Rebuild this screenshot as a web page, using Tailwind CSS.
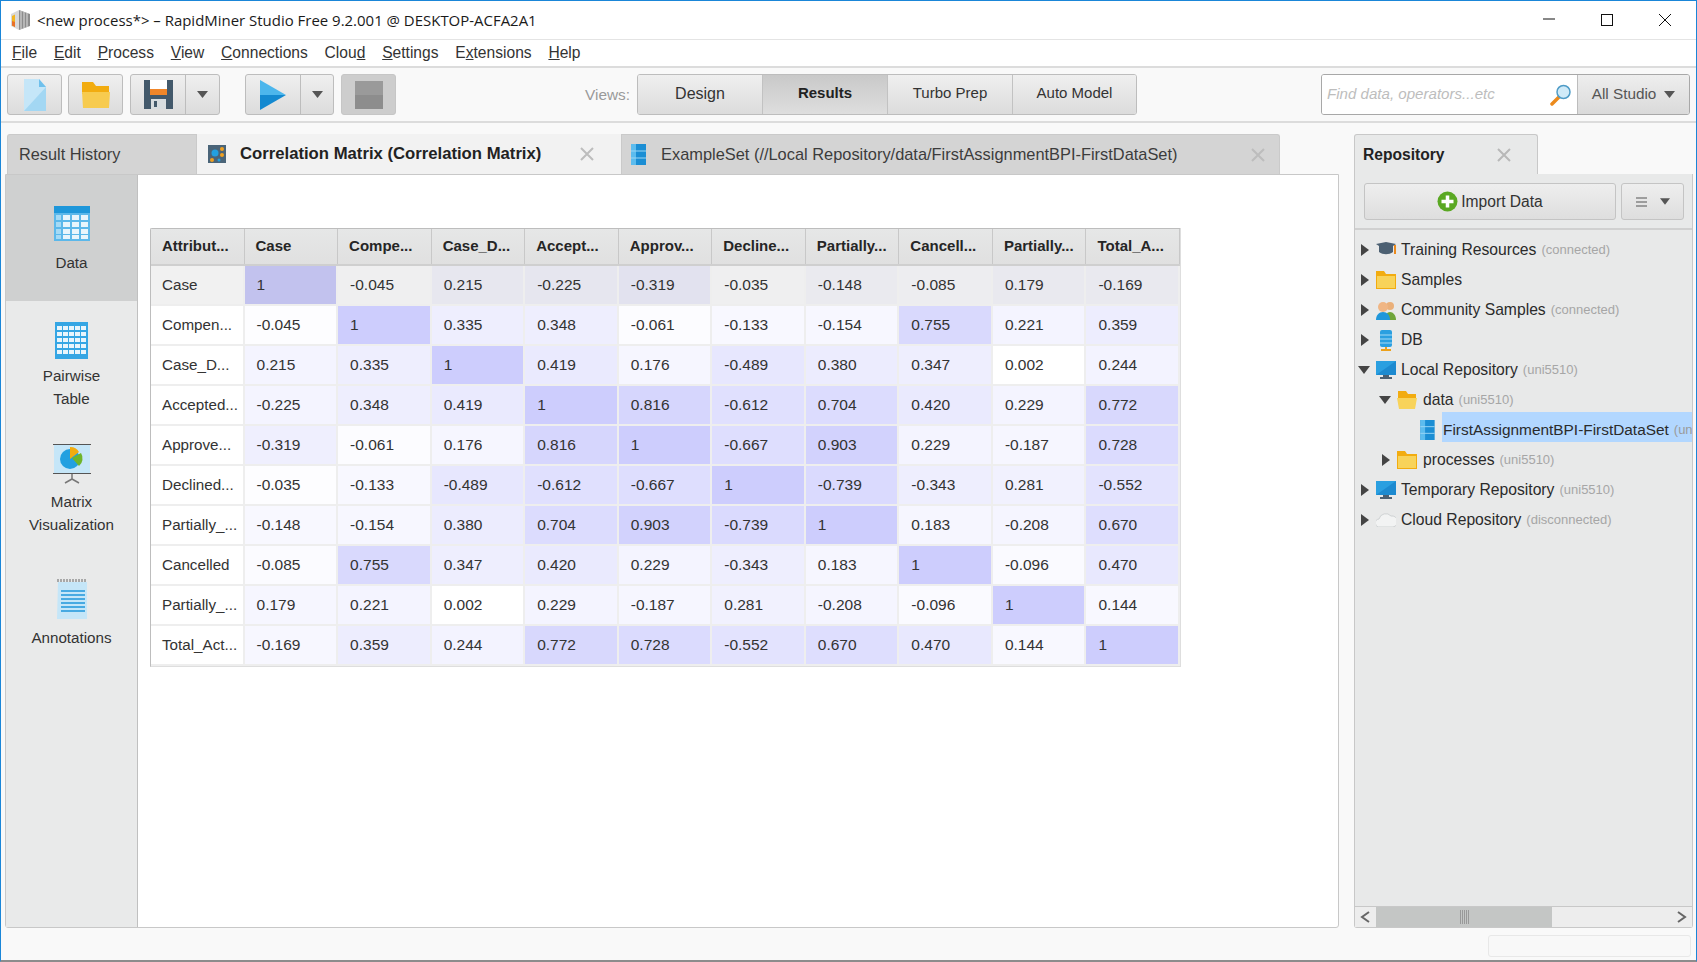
<!DOCTYPE html>
<html lang="en">
<head>
  <meta charset="UTF-8">
  <script src="https://cdn.jsdelivr.net/npm/@tailwindcss/browser@4"></script>
  <title>RapidMiner Studio</title>
</head>
<body class="m-0 overflow-hidden">
  <div class="w-[1697px] h-[962px] flex flex-col bg-[#f9f9f9] border-x border-t border-[#1a86d8] border-b-2 border-b-[#8c8c8c] font-['Liberation_Sans',sans-serif] text-[15.6px] text-[#2b2b2b] overflow-hidden">

    <!-- title bar -->
    <header class="h-[39px] shrink-0 bg-white border-b border-[#e4e4e4] flex items-center pl-[10px]">
      <svg class="w-[20px] h-[22px] mr-[6px]" viewBox="0 0 20 22">
        <path d="M0 5l8-4v20L0 17z" fill="#d9d9d9"/>
        <path d="M1 7l3-1.500V18l-3-1.500z" fill="#f2b521"/>
        <path d="M1 12l3 1v5l-3-1.500z" fill="#e8702a"/>
        <path d="M8 1l11 4v12l-11 4z" fill="#8c8c8c"/>
        <path d="M10 2v18M13 3v16M16 4v14" stroke="#d2d2d2" stroke-width="1.200"/>
      </svg>
      <span class="font-['Open_Sans',sans-serif] text-[14.960px] text-[#1a1a1a]">&lt;new process*&gt; – RapidMiner Studio Free 9.2.001 @ DESKTOP-ACFA2A1</span>
      <div class="ml-auto flex items-center">
        <svg class="w-[14px] h-[14px] mr-[44px]" viewBox="0 0 14 14"><path d="M1 6h12" stroke="#111" stroke-width="1"/></svg>
        <svg class="w-[14px] h-[14px] mr-[44px]" viewBox="0 0 14 14"><rect x="1.500" y="1.500" width="11" height="11" fill="none" stroke="#111"/></svg>
        <svg class="w-[14px] h-[14px] mr-[24px]" viewBox="0 0 14 14"><path d="M1 1l12 12M13 1L1 13" stroke="#111"/></svg>
      </div>
    </header>

    <!-- menu bar -->
    <nav class="h-[28px] shrink-0 bg-white border-b-2 border-[#dcdcdc] flex items-center pl-[11px] gap-[16.800px] text-[#333]">
      <span><u>F</u>ile</span>
      <span><u>E</u>dit</span>
      <span><u>P</u>rocess</span>
      <span><u>V</u>iew</span>
      <span><u>C</u>onnections</span>
      <span>Clou<u>d</u></span>
      <span><u>S</u>ettings</span>
      <span>E<u>x</u>tensions</span>
      <span><u>H</u>elp</span>
    </nav>

    <!-- toolbar -->
    <div class="h-[55px] shrink-0 border-b-2 border-[#dcdcdc] flex items-center pl-[6px]">
      <button class="w-[55px] h-[41px] rounded-[3px] border border-[#bdbdbd] bg-gradient-to-b from-[#efefef] to-[#dcdcdc] flex items-center justify-center">
        <svg class="w-[24px] h-[34px]" viewBox="0 0 24 34">
          <path d="M1 1h15l7 8v24H1z" fill="#c5e6f8"/>
          <path d="M1 33L23 9v24z" fill="#a3d7f3"/>
          <path d="M16 1l7 8h-7z" fill="#6fc0ec"/>
        </svg>
      </button>
      <button class="w-[55px] h-[41px] ml-[6px] rounded-[3px] border border-[#bdbdbd] bg-gradient-to-b from-[#efefef] to-[#dcdcdc] flex items-center justify-center">
        <svg class="w-[30px] h-[28px]" viewBox="0 0 30 28">
          <path d="M1 1h11l3 4h13v8H1z" fill="#f2ac10"/>
          <path d="M1 11h28l-1 16H2z" fill="#f7cb4f"/>
        </svg>
      </button>
      <div class="w-[90px] h-[41px] ml-[7px] rounded-[3px] border border-[#bdbdbd] bg-gradient-to-b from-[#efefef] to-[#dcdcdc] flex items-center">
        <div class="w-[55px] flex justify-center border-r border-[#bdbdbd] h-full items-center">
          <svg class="w-[29px] h-[29px]" viewBox="0 0 29 29">
            <path d="M0 0h29v29H0z" fill="#43596b"/>
            <path d="M6 0h17v13H6z" fill="#fff"/>
            <path d="M6 9h17v6H6z" fill="#f0862a"/>
            <path d="M7 19h15v10H7z" fill="#d8dde0"/>
            <path d="M10 21h3v6h-3z" fill="#43596b"/>
          </svg>
        </div>
        <svg class="w-[11px] h-[7px] mx-auto" viewBox="0 0 11 7"><path d="M0 0h11L5.500 7z" fill="#555"/></svg>
      </div>
      <div class="w-[89px] h-[41px] ml-[25px] rounded-[3px] border border-[#bdbdbd] bg-gradient-to-b from-[#efefef] to-[#dcdcdc] flex items-center">
        <div class="w-[55px] flex justify-center border-r border-[#bdbdbd] h-full items-center">
          <svg class="w-[26px] h-[30px]" viewBox="0 0 26 30">
            <path d="M0 0l26 15H0z" fill="#4cb6ec"/>
            <path d="M0 15h26L0 30z" fill="#1389d0"/>
          </svg>
        </div>
        <svg class="w-[11px] h-[7px] mx-auto" viewBox="0 0 11 7"><path d="M0 0h11L5.500 7z" fill="#555"/></svg>
      </div>
      <button class="w-[55px] h-[41px] ml-[7px] rounded-[3px] bg-[#cdcdcd] border border-[#c6c6c6] flex items-center justify-center">
        <svg class="w-[28px] h-[28px]" viewBox="0 0 28 28">
          <rect width="28" height="14" fill="#9a9a9a"/>
          <rect y="14" width="28" height="14" fill="#8d8d8d"/>
        </svg>
      </button>

      <span class="ml-[189px] text-[#9a9a9a] text-[15.400px] w-[52px]">Views:</span>
      <div class="w-[500px] h-[41px] rounded-[3px] border border-[#bdbdbd] flex overflow-hidden text-[#333] text-[15px]">
        <div class="w-[125px] flex items-center justify-center pb-[2px] bg-gradient-to-b from-[#efefef] to-[#dcdcdc] border-r border-[#c2c2c2] text-[16px]">Design</div>
        <div class="w-[125px] flex items-center justify-center pb-[2px] bg-gradient-to-b from-[#c9c9c9] to-[#dedede] border-r border-[#c2c2c2] font-bold text-[#222]">Results</div>
        <div class="w-[125px] flex items-center justify-center pb-[2px] bg-gradient-to-b from-[#efefef] to-[#dcdcdc] border-r border-[#c2c2c2]">Turbo Prep</div>
        <div class="flex-1 flex items-center justify-center pb-[2px] bg-gradient-to-b from-[#efefef] to-[#dcdcdc]">Auto Model</div>
      </div>

      <div class="w-[369px] h-[41px] ml-[184px] rounded-[3px] border border-[#a8a8a8] flex overflow-hidden">
        <div class="w-[256px] bg-white flex items-center pl-[5px] pr-[5px] border-r border-[#bdbdbd]">
          <span class="italic text-[#bdbdbd] text-[15.100px]">Find data, operators...etc</span>
          <svg class="ml-auto w-[22px] h-[22px]" viewBox="0 0 22 22">
            <path d="M2 20l7-7" stroke="#ec8a1c" stroke-width="3.500" stroke-linecap="round"/>
            <circle cx="13.500" cy="8" r="6.500" fill="#cfeaf8" stroke="#4f9cc7" stroke-width="1.500"/>
          </svg>
        </div>
        <div class="flex-1 flex items-center justify-center gap-[8px] bg-gradient-to-b from-[#eeeeee] to-[#dadada] text-[#555] text-[15.300px]">
          All Studio
          <svg class="w-[11px] h-[7px]" viewBox="0 0 11 7"><path d="M0 0h11L5.500 7z" fill="#555"/></svg>
        </div>
      </div>
    </div>

    <!-- main area -->
    <div class="flex-1 flex pt-[11px] pl-[4px]">
      <!-- results perspective -->
      <div class="w-[1334px] flex flex-col">
        <div class="h-[40px] flex shrink-0">
          <div class="w-[190px] ml-[2px] rounded-tl-[3px] bg-[#d4d4d4] border border-[#cacaca] border-b-0 flex items-center pl-[11px] text-[#3c3c3c] text-[16.300px]">Result History</div>
          <div class="w-[424px] bg-[#f2f2f2] flex items-center pl-[11px] pr-[27px]">
            <svg class="w-[18px] h-[18px] mr-[14px]" viewBox="0 0 18 18">
              <rect width="18" height="18" fill="#4a6478"/>
              <circle cx="7" cy="8" r="3.500" fill="#22a0e0"/>
              <circle cx="14" cy="4" r="2" fill="#f0a020"/>
              <circle cx="14" cy="10" r="2" fill="#f0a020"/>
              <circle cx="4" cy="15" r="2" fill="#f0a020"/>
              <circle cx="11" cy="15" r="1.500" fill="#22a0e0"/>
            </svg>
            <span class="font-bold text-[#222] text-[16.700px]">Correlation Matrix (Correlation Matrix)</span>
            <svg class="ml-auto w-[14px] h-[14px]" viewBox="0 0 14 14"><path d="M1 1l12 12M13 1L1 13" stroke="#bdbdbd" stroke-width="2"/></svg>
          </div>
          <div class="w-[659px] rounded-tr-[3px] bg-[#d4d4d4] border border-[#cacaca] border-b-0 flex items-center pl-[9px] pr-[14px] text-[#3c3c3c]">
            <svg class="w-[15px] h-[21px] mr-[15px]" viewBox="0 0 15 21">
              <rect width="15" height="21" fill="#1b8ed4"/>
              <rect width="5" height="21" fill="#5cbcee"/>
              <path d="M0 7h15M0 14h15" stroke="#9ad6f4"/>
            </svg>
            <span class="text-[16.400px]">ExampleSet (//Local Repository/data/FirstAssignmentBPI-FirstDataSet)</span>
            <svg class="ml-auto w-[14px] h-[14px]" viewBox="0 0 14 14"><path d="M1 1l12 12M13 1L1 13" stroke="#bdbdbd" stroke-width="2"/></svg>
          </div>
        </div>

        <div class="h-[754px] flex border border-[#c8c8c8] rounded-b-[3px] bg-white">
          <!-- side tabs -->
          <aside class="w-[132px] shrink-0 bg-[#e9eaea] border-r border-[#c0c0c0] text-[#333] text-[15.200px] flex flex-col items-center text-center">
            <div class="w-full h-[126px] bg-[#cfd0d0] flex flex-col items-center pt-[31px]">
              <svg class="w-[36px] h-[35px]" viewBox="0 0 36 35">
                <rect width="36" height="35" fill="#5cb8ea"/>
                <rect width="36" height="7" fill="#1f97da"/>
                <g fill="#e8f5fc">
                  <rect x="9" y="9" width="7" height="5"/><rect x="18" y="9" width="7" height="5"/><rect x="27" y="9" width="7" height="5"/>
                  <rect x="9" y="16" width="7" height="5"/><rect x="18" y="16" width="7" height="5"/><rect x="27" y="16" width="7" height="5"/>
                  <rect x="9" y="23" width="7" height="5"/><rect x="18" y="23" width="7" height="5"/><rect x="27" y="23" width="7" height="5"/>
                  <rect x="9" y="29" width="7" height="4"/><rect x="18" y="29" width="7" height="4"/><rect x="27" y="29" width="7" height="4"/>
                </g>
                <g fill="#a5daf5">
                  <rect x="2" y="9" width="5" height="5"/><rect x="2" y="16" width="5" height="5"/><rect x="2" y="23" width="5" height="5"/><rect x="2" y="29" width="5" height="4"/>
                </g>
              </svg>
              <span class="mt-[11px]">Data</span>
            </div>
            <div class="mt-[21px] flex flex-col items-center leading-[22.500px]">
              <svg class="w-[33px] h-[37px] mb-[6px]" viewBox="0 0 33 37">
                <rect width="33" height="37" fill="#35a6e4"/>
                <g fill="#e8f5fc">
                  <rect x="2" y="4" width="5" height="4"/><rect x="8" y="4" width="5" height="4"/><rect x="14" y="4" width="5" height="4"/><rect x="20" y="4" width="5" height="4"/><rect x="26" y="4" width="5" height="4"/>
                  <rect x="2" y="10" width="5" height="4"/><rect x="8" y="10" width="5" height="4"/><rect x="14" y="10" width="5" height="4"/><rect x="20" y="10" width="5" height="4"/><rect x="26" y="10" width="5" height="4"/>
                  <rect x="2" y="16" width="5" height="4"/><rect x="8" y="16" width="5" height="4"/><rect x="14" y="16" width="5" height="4"/><rect x="20" y="16" width="5" height="4"/><rect x="26" y="16" width="5" height="4"/>
                  <rect x="2" y="22" width="5" height="4"/><rect x="8" y="22" width="5" height="4"/><rect x="14" y="22" width="5" height="4"/><rect x="20" y="22" width="5" height="4"/><rect x="26" y="22" width="5" height="4"/>
                  <rect x="2" y="28" width="5" height="4"/><rect x="8" y="28" width="5" height="4"/><rect x="14" y="28" width="5" height="4"/><rect x="20" y="28" width="5" height="4"/><rect x="26" y="28" width="5" height="4"/>
                </g>
              </svg>
              <span>Pairwise<br>Table</span>
            </div>
            <div class="mt-[34px] flex flex-col items-center leading-[22.500px]">
              <svg class="w-[38px] h-[40px] mb-[7px]" viewBox="0 0 38 40">
                <rect x="1" y="1" width="36" height="28" fill="#c5e6f8"/>
                <path d="M0 .5h38M0 29.500h38" stroke="#555"/>
                <path d="M19 30v5M19 35l-7 4M19 35l7 4" stroke="#777" stroke-width="1.500"/>
                <circle cx="17" cy="15" r="10" fill="#22a0e0"/>
                <path d="M17 15V3a10 10 0 0 1 9 5z" fill="#f2ac10"/>
                <path d="M19 14l9-5a10 10 0 0 1-2 13z" fill="#6fb52a"/>
              </svg>
              <span>Matrix<br>Visualization</span>
            </div>
            <div class="mt-[43px] flex flex-col items-center">
              <svg class="w-[30px] h-[40px] mb-[8px]" viewBox="0 0 30 40">
                <path d="M1 0v3M4 0v3M7 0v3M10 0v3M13 0v3M16 0v3M19 0v3M22 0v3M25 0v3M28 0v3" stroke="#666"/>
                <path d="M1 3h29v37H0z" fill="#c5e6f8"/>
                <path d="M4 12h24M4 16h24M4 20h24M4 24h24M4 28h24M4 32h24" stroke="#1f97da" stroke-width="1.500"/>
              </svg>
              <span>Annotations</span>
            </div>
          </aside>

          <div class="flex-1 pt-[53px] pl-[12px]">
            <div id="matrix" class="w-[1031px] border border-[#dedede] border-t-[#bdbdbd] border-l-[#bdbdbd] rounded-tl-[2px]"></div>
          </div>
        </div>
      </div>

      <!-- repository panel -->
      <div class="w-[339px] ml-[15px] flex flex-col text-[15.700px]">
        <div class="h-[40px] flex shrink-0">
          <div class="w-[184px] rounded-t-[3px] bg-[#e8e9e9] border border-[#c8c8c8] border-b-0 flex items-center pl-[8px] pr-[26px] font-bold text-[#222] text-[15.600px]">
            Repository
            <svg class="ml-auto w-[14px] h-[14px]" viewBox="0 0 14 14"><path d="M1 1l12 12M13 1L1 13" stroke="#b8b8b8" stroke-width="2"/></svg>
          </div>
        </div>
        <div class="h-[754px] bg-[#e8e9e9] border border-[#c8c8c8] border-t-0 rounded-b-[3px] flex flex-col">
          <div class="h-[56px] shrink-0 border-b-2 border-[#d0d0d0] flex items-center pl-[9px] gap-[5px] pt-[1px]">
            <button class="w-[252px] h-[37px] rounded-[3px] border border-[#c4c4c4] bg-gradient-to-b from-[#eeeeee] to-[#dedede] flex items-center justify-center gap-[3px] text-[#333] text-[15.600px]">
              <svg class="w-[21px] h-[21px]" viewBox="0 0 21 21">
                <circle cx="10.500" cy="10.500" r="10" fill="#5aa823"/>
                <path d="M10.500 4.500v12M4.500 10.500h12" stroke="#fff" stroke-width="3.500"/>
              </svg>
              Import Data
            </button>
            <button class="w-[63px] h-[37px] rounded-[3px] border border-[#c4c4c4] bg-gradient-to-b from-[#eeeeee] to-[#dedede] flex items-center justify-center gap-[13px]">
              <svg class="w-[11px] h-[10px]" viewBox="0 0 11 10"><path d="M0 1h11M0 5h11M0 9h11" stroke="#555" stroke-width="1.200"/></svg>
              <svg class="w-[10px] h-[7px]" viewBox="0 0 11 7"><path d="M0 0h11L5.500 7z" fill="#555"/></svg>
            </button>
          </div>

          <div class="flex-1 pt-[5px] overflow-hidden whitespace-nowrap">
            <div class="h-[30px] flex items-center pl-[6px]">
              <svg class="w-[8px] h-[12px] mr-[7px]" viewBox="0 0 8 12"><path d="M0 0l8 6-8 6z" fill="#444"/></svg>
              <svg class="w-[20px] h-[16px] mr-[5px]" viewBox="0 0 20 16"><path d="M0 2l10-2 10 2-3 2v6c-4 3-10 3-14 0V4z" fill="#4c6072"/><path d="M19 3v9" stroke="#ec8a1c" stroke-width="2"/></svg>
              <span>Training Resources</span>
              <span class="ml-[5px] text-[13px] text-[#a6a6a6]">(connected)</span>
            </div>
            <div class="h-[30px] flex items-center pl-[6px]">
              <svg class="w-[8px] h-[12px] mr-[7px]" viewBox="0 0 8 12"><path d="M0 0l8 6-8 6z" fill="#444"/></svg>
              <svg class="w-[20px] h-[18px] mr-[5px]" viewBox="0 0 20 18"><path d="M0 0h8l2 3h10v15H0z" fill="#f2ac10"/><path d="M1 5h18v12H1z" fill="#f8d35a"/></svg>
              <span>Samples</span>
            </div>
            <div class="h-[30px] flex items-center pl-[6px]">
              <svg class="w-[8px] h-[12px] mr-[7px]" viewBox="0 0 8 12"><path d="M0 0l8 6-8 6z" fill="#444"/></svg>
              <svg class="w-[20px] h-[19px] mr-[5px]" viewBox="0 0 20 19">
                <circle cx="14" cy="5" r="4" fill="#eab07a"/>
                <path d="M9 19c0-5 2-8 5-8s6 3 6 8z" fill="#6fa53a"/>
                <circle cx="7" cy="6" r="5" fill="#f0b684"/>
                <path d="M0 19c0-5 3-8 7-8s7 3 7 8z" fill="#1f97da"/>
              </svg>
              <span>Community Samples</span>
              <span class="ml-[5px] text-[13px] text-[#a6a6a6]">(connected)</span>
            </div>
            <div class="h-[30px] flex items-center pl-[6px]">
              <svg class="w-[8px] h-[12px] mr-[7px]" viewBox="0 0 8 12"><path d="M0 0l8 6-8 6z" fill="#444"/></svg>
              <svg class="w-[20px] h-[21px] mr-[5px]" viewBox="0 0 20 21">
                <rect x="4" width="12" height="17" rx="2" fill="#2a9fe0"/>
                <path d="M4 5h12M4 9h12M4 13h12" stroke="#a5daf5"/>
                <path d="M10 17v3M5 20h10" stroke="#eda11a" stroke-width="2"/>
              </svg>
              <span>DB</span>
            </div>
            <div class="h-[30px] flex items-center pl-[3px]">
              <svg class="w-[12px] h-[8px] mr-[6px]" viewBox="0 0 12 8"><path d="M0 0h12L6 8z" fill="#444"/></svg>
              <svg class="w-[20px] h-[18px] mr-[5px]" viewBox="0 0 20 18"><rect width="20" height="14" fill="#2a9fe0"/><path d="M0 14L20 0v14z" fill="#1c8ad0"/><rect x="7" y="14" width="6" height="3" fill="#4c6072"/><rect x="4" y="16" width="12" height="2" fill="#4c6072"/></svg>
              <span>Local Repository</span>
              <span class="ml-[5px] text-[13px] text-[#a6a6a6]">(uni5510)</span>
            </div>
            <div class="h-[30px] flex items-center pl-[24px]">
              <svg class="w-[12px] h-[8px] mr-[6px]" viewBox="0 0 12 8"><path d="M0 0h12L6 8z" fill="#444"/></svg>
              <svg class="w-[20px] h-[18px] mr-[6px]" viewBox="0 0 20 18"><path d="M1 0h8l2 3h8v6H1z" fill="#f2ac10"/><path d="M0 7h20l-2 11H2z" fill="#f8d35a"/></svg>
              <span>data</span>
              <span class="ml-[5px] text-[13px] text-[#a6a6a6]">(uni5510)</span>
            </div>
            <div class="h-[30px] flex items-center pl-[65px]">
              <svg class="w-[15px] h-[20px] mr-[7px]" viewBox="0 0 15 21">
                <rect width="15" height="21" fill="#1b8ed4"/>
                <rect width="5" height="21" fill="#5cbcee"/>
                <path d="M0 7h15M0 14h15" stroke="#9ad6f4"/>
              </svg>
              <div class="flex-1 h-[30px] mb-[6px] pt-[6px] bg-[#b2d7ff] flex items-center pl-[1px] overflow-hidden text-[15.400px]">
                <span>FirstAssignmentBPI-FirstDataSet</span>
                <span class="ml-[5px] text-[13px] text-[#9a9a9a]">(uni5510)</span>
              </div>
            </div>
            <div class="h-[30px] flex items-center pl-[27px]">
              <svg class="w-[8px] h-[12px] mr-[7px]" viewBox="0 0 8 12"><path d="M0 0l8 6-8 6z" fill="#444"/></svg>
              <svg class="w-[20px] h-[18px] mr-[6px]" viewBox="0 0 20 18"><path d="M0 0h8l2 3h10v15H0z" fill="#f2ac10"/><path d="M1 5h18v12H1z" fill="#f8d35a"/></svg>
              <span>processes</span>
              <span class="ml-[5px] text-[13px] text-[#a6a6a6]">(uni5510)</span>
            </div>
            <div class="h-[30px] flex items-center pl-[6px]">
              <svg class="w-[8px] h-[12px] mr-[7px]" viewBox="0 0 8 12"><path d="M0 0l8 6-8 6z" fill="#444"/></svg>
              <svg class="w-[20px] h-[18px] mr-[5px]" viewBox="0 0 20 18"><rect width="20" height="14" fill="#2a9fe0"/><path d="M0 14L20 0v14z" fill="#1c8ad0"/><rect x="7" y="14" width="6" height="3" fill="#4c6072"/><rect x="4" y="16" width="12" height="2" fill="#4c6072"/></svg>
              <span>Temporary Repository</span>
              <span class="ml-[5px] text-[13px] text-[#a6a6a6]">(uni5510)</span>
            </div>
            <div class="h-[30px] flex items-center pl-[6px]">
              <svg class="w-[8px] h-[12px] mr-[7px]" viewBox="0 0 8 12"><path d="M0 0l8 6-8 6z" fill="#444"/></svg>
              <svg class="w-[20px] h-[14px] mr-[5px]" viewBox="0 0 20 14"><path d="M4 14a4 4 0 0 1-1-8 7 7 0 0 1 12-3 5 5 0 0 1 2 11z" fill="#f2f3f3" stroke="#cfd2d3"/></svg>
              <span>Cloud Repository</span>
              <span class="ml-[5px] text-[13px] text-[#a6a6a6]">(disconnected)</span>
            </div>
          </div>

          <!-- tree scrollbar -->
          <div class="h-[21px] shrink-0 border-t border-[#c8c8c8] flex items-center bg-[#ededed]">
            <svg class="w-[21px] h-[14px] shrink-0" viewBox="0 0 21 14"><path d="M14 2L7 7l7 5" fill="none" stroke="#666" stroke-width="2"/></svg>
            <div class="w-[176px] h-full bg-[#c4c6c5] flex items-center justify-center">
              <svg class="w-[9px] h-[14px]" viewBox="0 0 9 14"><path d="M.5 0v14M2.500 0v14M4.500 0v14M6.500 0v14M8.500 0v14" stroke="#999"/></svg>
            </div>
            <svg class="ml-auto w-[22px] h-[14px] shrink-0" viewBox="0 0 22 14"><path d="M8 2l7 5-7 5" fill="none" stroke="#666" stroke-width="2"/></svg>
          </div>
        </div>
      </div>
    </div>

    <!-- status bar -->
    <footer class="h-[27px] shrink-0 flex justify-end pr-[5px] pb-[3px] items-end">
      <div class="w-[203px] h-[22px] rounded-[3px] border border-[#e8e8e8] bg-[#f8f8f8]"></div>
    </footer>
  </div>

  <script>
    const headers = ['Attribut...', 'Case', 'Compe...', 'Case_D...', 'Accept...', 'Approv...', 'Decline...', 'Partially...', 'Cancell...', 'Partially...', 'Total_A...'];
    const labels = ['Case', 'Compen...', 'Case_D...', 'Accepted...', 'Approve...', 'Declined...', 'Partially_...', 'Cancelled', 'Partially_...', 'Total_Act...'];
    const matrix = [
      ['1', '-0.045', '0.215', '-0.225', '-0.319', '-0.035', '-0.148', '-0.085', '0.179', '-0.169'],
      ['-0.045', '1', '0.335', '0.348', '-0.061', '-0.133', '-0.154', '0.755', '0.221', '0.359'],
      ['0.215', '0.335', '1', '0.419', '0.176', '-0.489', '0.380', '0.347', '0.002', '0.244'],
      ['-0.225', '0.348', '0.419', '1', '0.816', '-0.612', '0.704', '0.420', '0.229', '0.772'],
      ['-0.319', '-0.061', '0.176', '0.816', '1', '-0.667', '0.903', '0.229', '-0.187', '0.728'],
      ['-0.035', '-0.133', '-0.489', '-0.612', '-0.667', '1', '-0.739', '-0.343', '0.281', '-0.552'],
      ['-0.148', '-0.154', '0.380', '0.704', '0.903', '-0.739', '1', '0.183', '-0.208', '0.670'],
      ['-0.085', '0.755', '0.347', '0.420', '0.229', '-0.343', '0.183', '1', '-0.096', '0.470'],
      ['0.179', '0.221', '0.002', '0.229', '-0.187', '0.281', '-0.208', '-0.096', '1', '0.144'],
      ['-0.169', '0.359', '0.244', '0.772', '0.728', '-0.552', '0.670', '0.470', '0.144', '1'],
    ];

    const shade = (value, dark) => {
      const k = dark ? 0.945 : 1;
      const c = Math.round((255 - Math.abs(value) * 50) * k);
      const b = Math.round((255 - Math.abs(value) * 2) * (dark ? 0.94 : 1));
      return `rgb(${c},${c},${b})`;
    };

    let html = '<div class="grid grid-cols-[repeat(11,1fr)] h-[37px] bg-gradient-to-b from-[#e6e7e7] to-[#e0e0e0] border-b-2 border-[#cfcfcf] font-bold text-[#262626] text-[15px]">';
    headers.forEach((h) => {
      html += `<div class="flex items-center pl-[11px] border-r border-[#c8c8c8]">${h}</div>`;
    });
    html += '</div>';

    matrix.forEach((row, r) => {
      html += '<div class="grid grid-cols-[repeat(11,1fr)] h-[40px] text-[#333] text-[15.500px]">';
      html += `<div class="flex items-center pl-[11px] border-r-2 border-b-2 border-[#eeeeee] overflow-hidden whitespace-nowrap text-[15.200px] ${r === 0 ? 'bg-[#f1f1f1]' : 'bg-white'}">${labels[r]}</div>`;
      row.forEach((v) => {
        html += `<div class="flex items-center pl-[12px] border-r-2 border-b-2 border-[#eeeeee]" style="background:${shade(parseFloat(v), r === 0)}">${v}</div>`;
      });
      html += '</div>';
    });

    document.getElementById('matrix').innerHTML = html;
  </script>
</body>
</html>
